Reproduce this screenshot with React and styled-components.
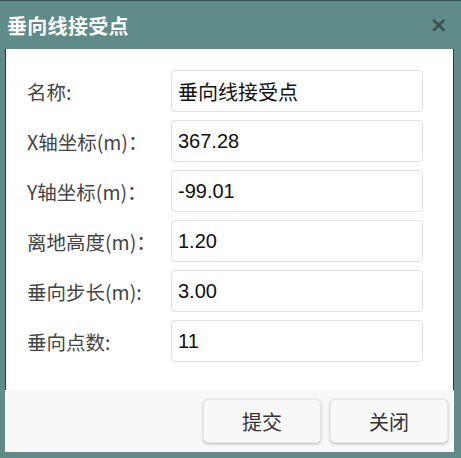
import styled, { createGlobalStyle } from 'styled-components';

const GlobalStyle = createGlobalStyle`
    html, body {
        margin: 0;
        padding: 0;
        background: #5f8b89;
    }
    body {
        font-family: 'Liberation Sans', 'Noto Sans CJK SC', sans-serif;
    }
`;

const fields = [
    { label: '名称:', value: '垂向线接受点' },
    { label: 'X轴坐标(m)：', value: '367.28' },
    { label: 'Y轴坐标(m)：', value: '-99.01' },
    { label: '离地高度(m)：', value: '1.20' },
    { label: '垂向步长(m):', value: '3.00' },
    { label: '垂向点数:', value: '11' },
];

const App = () => {
    return (
        <>
            <GlobalStyle />
            <Dialog>
                <TitleBar>
                    <Title>垂向线接受点</Title>
                    <CloseButton>×</CloseButton>
                </TitleBar>
                <Body>
                    {fields.map(field => (
                        <FormRow key={field.label}>
                            <Label>{field.label}</Label>
                            <Input defaultValue={field.value} />
                        </FormRow>
                    ))}
                </Body>
                <Footer>
                    <Button>提交</Button>
                    <Button>关闭</Button>
                </Footer>
            </Dialog>
        </>
    );
};

export default App;

const Dialog = styled.div`
    width: 461px;
    height: 458px;
    box-sizing: border-box;
    background: #5f8b89;
    padding: 0 7px 6px 5px;
    display: flex;
    flex-direction: column;
    border-top: 1px solid #3b4f4e;
`;

const TitleBar = styled.div`
    height: 48px;
    display: flex;
    align-items: center;
    justify-content: space-between;
    padding-left: 2px;
    padding-right: 6px;
`;

const Title = styled.div`
    color: #fff;
    font-family: 'Noto Sans CJK SC', sans-serif;
    font-weight: 700;
    font-size: 20px;
    letter-spacing: 0.3px;
`;

const CloseButton = styled.div`
    color: #3e4f50;
    font-family: 'DejaVu Sans', sans-serif;
    font-weight: 700;
    font-size: 22px;
    line-height: 1;
`;

const Body = styled.div`
    background: #fff;
    border-left: 1px solid #2d3a3a;
    border-right: 1px solid #2d3a3a;
    padding: 21px 0 28px 21px;
    display: flex;
    flex-direction: column;
    gap: 8px;
`;

const FormRow = styled.div`
    display: flex;
    align-items: center;
    height: 42px;
`;

const Label = styled.div`
    width: 144px;
    color: #444;
    font-family: 'Noto Sans CJK SC', sans-serif;
    font-size: 19.5px;
    white-space: nowrap;
`;

const Input = styled.input`
    width: 252px;
    height: 42px;
    box-sizing: border-box;
    border: 1px solid #e2e2e2;
    border-radius: 4px;
    padding: 0 6px;
    font-family: 'Liberation Sans', 'Noto Sans CJK SC', sans-serif;
    font-size: 20px;
    color: #111;
    outline: none;
`;

const Footer = styled.div`
    flex: 1;
    background: #f8f8f8;
    display: flex;
    justify-content: flex-end;
    align-items: flex-start;
    gap: 9px;
    padding: 9px 6px 0 0;
`;

const Button = styled.button`
    width: 118px;
    height: 44px;
    background: #f8f8f8;
    border: 1px solid #e6e6e6;
    border-radius: 5px;
    box-shadow: 0 1px 3px rgba(0, 0, 0, 0.25);
    font-family: 'Noto Sans CJK SC', sans-serif;
    font-size: 20px;
    color: #333;
`;
